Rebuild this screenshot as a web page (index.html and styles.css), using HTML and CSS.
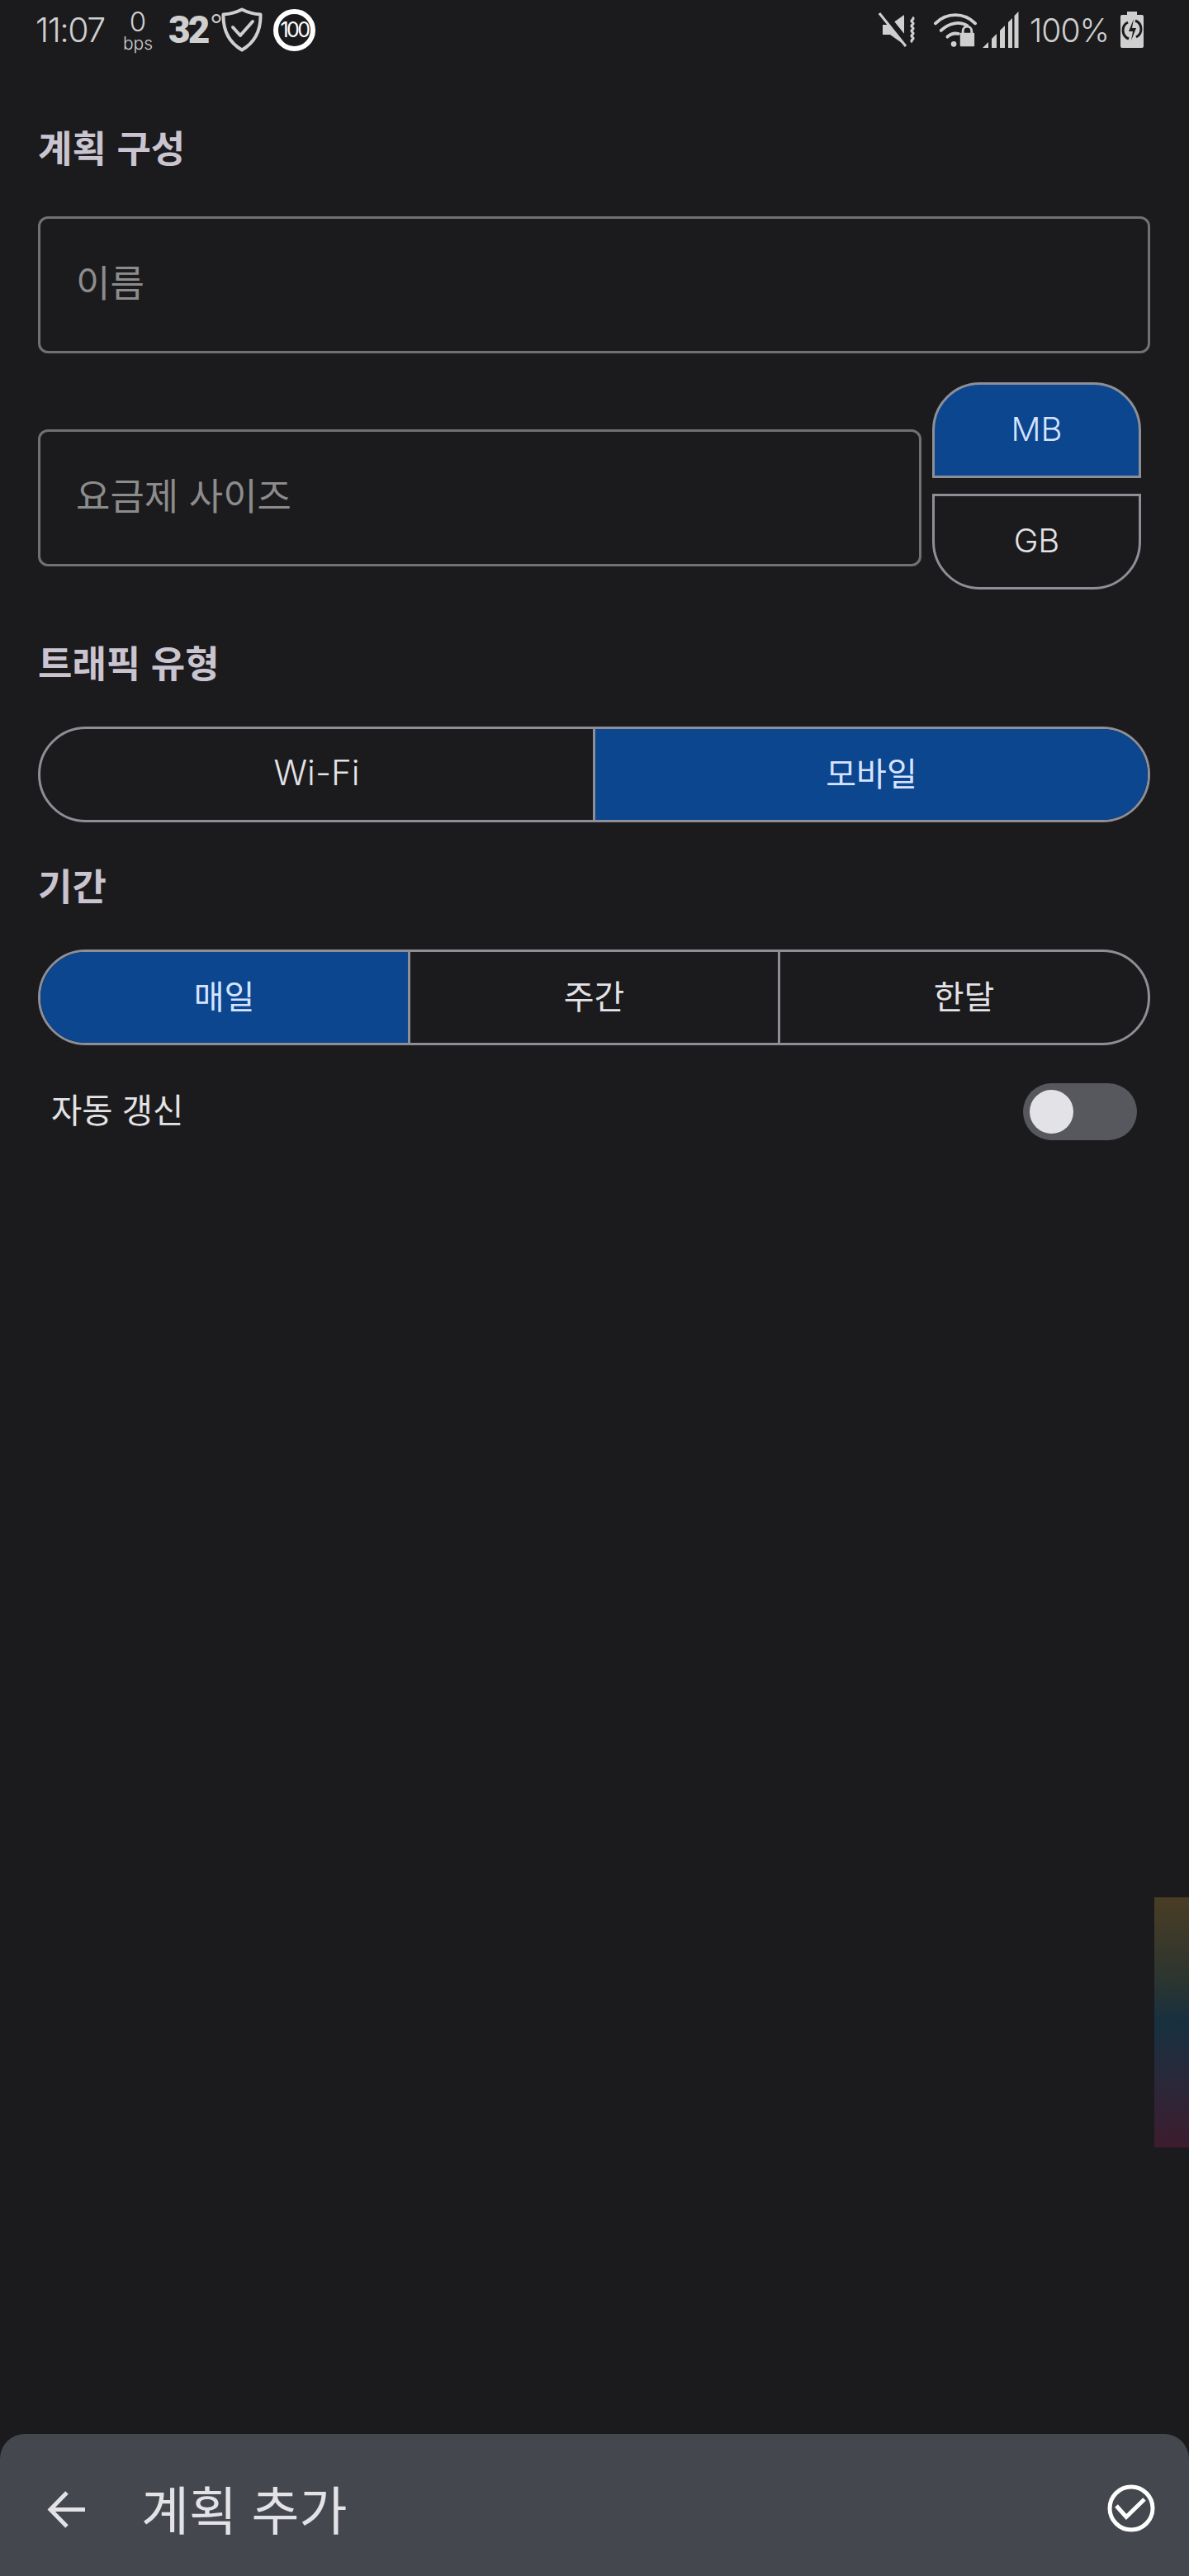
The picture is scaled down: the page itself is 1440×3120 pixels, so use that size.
FILE: index.html
```html
<!DOCTYPE html>
<html lang="ko">
<head>
<meta charset="utf-8">
<title>계획 추가</title>
<link rel="stylesheet" href="styles.css">
</head>
<body>
<div class="page">
  <header class="status">
    <div class="status-left">
      <span class="time">11:07</span>
      <span class="speed"><span class="speed-num">0</span><span class="speed-unit">bps</span></span>
      <span class="temp">32<span class="deg">°</span></span>
      <svg class="ic-shield" viewBox="0 0 50 54" width="50" height="54"><path d="M25 2.5C33 6.5 40 8 47.500 8.500C48 27 41 42 25 51.500C9 42 2 27 2.500 8.500C10 8 17 6.500 25 2.500Z" fill="none" stroke="#cfcfcf" stroke-width="4" stroke-linejoin="round"/><path d="M14 24l9 10 15-17" fill="none" stroke="#cfcfcf" stroke-width="4" stroke-linecap="round" stroke-linejoin="round"/></svg>
      <span class="badge">100</span>
    </div>
    <div class="status-right">
      <svg class="ic-mute" viewBox="0 0 46 42" width="46" height="42"><path d="M5 15h9L31 3v36L14 27H5z" fill="#cfcfcf"/><path d="M5 0l34 42" stroke="#1b1b1d" stroke-width="8"/><path d="M1 1l32 40" stroke="#cfcfcf" stroke-width="3"/><path d="M41 6c4 2.500-4 3.500 0 6s-4 3.500 0 6-4 3.500 0 6-4 3.500 0 6-4 3.500 0 6" fill="none" stroke="#cfcfcf" stroke-width="3"/></svg>
      <svg class="ic-wifi" viewBox="0 0 54 44" width="52" height="44"><g fill="none" stroke="#cfcfcf" stroke-width="4" stroke-linecap="round"><path d="M2 14C16 0 38 0 52 14"/><path d="M9 23C19 13 33 11 42 17"/><path d="M17 31c4-4 9-5 14-4"/></g><circle cx="25" cy="40" r="3.500" fill="#cfcfcf"/><path d="M34 26h16a1 1 0 0 1 1 1v15a1 1 0 0 1-1 1H34a1 1 0 0 1-1-1V27a1 1 0 0 1 1-1z" fill="#cfcfcf"/><path d="M36.500 27v-3.500a5.500 5.500 0 0 1 11 0V27" fill="none" stroke="#cfcfcf" stroke-width="3"/></svg>
      <svg class="ic-signal" viewBox="0 0 44 44" width="44" height="44"><g fill="#cfcfcf"><path d="M0 44l7-7v7z"/><path d="M11 33l6-6v17h-6z"/><path d="M21 23l6-6v27h-6z"/><path d="M31 13l5-5v36h-5z"/><path d="M38.500 5l5-5v44h-5z"/></g></svg>
      <span class="pct">100%</span>
      <svg class="ic-batt" viewBox="0 0 28 44" width="28" height="44"><path d="M8 0h12v4h6a2 2 0 0 1 2 2v36a2 2 0 0 1-2 2H2a2 2 0 0 1-2-2V6a2 2 0 0 1 2-2h6z" fill="#cfcfcf"/><g fill="none" stroke="#1b1b1d" stroke-width="3"><path d="M10 33a11 11 0 0 1-1-20"/><path d="M18 11a11 11 0 0 1 1 20"/></g><path d="M16 9l-6 15h5l-2 11 6-15h-5z" fill="#1b1b1d"/></svg>
    </div>
  </header>

  <main class="form">
    <h2 class="heading heading-plan">계획 구성</h2>
    <div class="field field-name">이름</div>
    <div class="size-row">
      <div class="field field-size">요금제 사이즈</div>
      <div class="units">
        <div class="unit unit-top active">MB</div>
        <div class="unit unit-bottom">GB</div>
      </div>
    </div>
    <h2 class="heading heading-traffic">트래픽 유형</h2>
    <div class="segments">
      <div class="segment segment-latin">Wi-Fi</div>
      <div class="segment active">모바일</div>
    </div>
    <h2 class="heading heading-period">기간</h2>
    <div class="segments">
      <div class="segment active">매일</div>
      <div class="segment">주간</div>
      <div class="segment">한달</div>
    </div>
    <div class="toggle-row">
      <span class="toggle-label">자동 갱신</span>
      <span class="switch"><span class="knob"></span></span>
    </div>
  </main>

  <div class="edge-panel"></div>

  <footer class="bar">
    <svg class="ic-back" viewBox="0 0 48 48" width="48" height="48"><path d="M46 23.500H6M24 3L4 23.500 24 44" fill="none" stroke="#e3e2e6" stroke-width="5"/></svg>
    <span class="bar-title">계획 추가</span>
    <svg class="ic-done" viewBox="0 0 58 58" width="58" height="58"><circle cx="29" cy="29" r="26" fill="none" stroke="#fff" stroke-width="5"/><path d="M11 26l12 13.500L45 18" fill="none" stroke="#fff" stroke-width="5"/></svg>
  </footer>
</div>
</body>
</html>
```

FILE: styles.css
```css
* { box-sizing: border-box; }
html, body { margin: 0; padding: 0; }
body {
  background: #1b1b1d;
  color: #e3e2e6;
  font-family: "Noto Sans CJK KR", "Noto Sans", sans-serif;
}
.page {
  position: relative;
  width: 1440px;
  height: 3120px;
  display: flex;
  flex-direction: column;
  overflow: hidden;
}

/* status bar */
.status {
  height: 72px;
  display: flex;
  justify-content: space-between;
  align-items: center;
  padding: 0 55px 0 43px;
  color: #cfcfcf;
  font-family: Inter, "Noto Sans", sans-serif;
}
.status-left, .status-right { display: flex; align-items: center; }
.time { font-size: 41px; font-weight: 300; letter-spacing: -1.500px; width: 106px; }
.speed {
  width: 56px;
  display: flex;
  flex-direction: column;
  align-items: center;
  margin-left: -10px;
  font-weight: 300;
}
.speed-num { font-size: 33px; line-height: 34px; }
.speed-unit { font-size: 21px; line-height: 20px; }
.temp {
  margin-left: 9px;
  font-family: Roboto, sans-serif;
  font-size: 46px;
  font-weight: 900;
  letter-spacing: -3px;
  width: 64px;
}
.deg { font-weight: 300; position: relative; top: -2px; margin-left: 2px; }
.badge {
  margin-left: 13px;
  width: 51px;
  height: 51px;
  border: 6px solid #fff;
  border-radius: 50%;
  display: flex;
  align-items: center;
  justify-content: center;
  color: #fff;
  font-size: 25px;
  letter-spacing: -2.500px;
  font-weight: 400;
}
.ic-wifi { margin-left: 21px; }
.ic-signal { margin-left: 7px; }
.pct { font-size: 39px; font-weight: 300; letter-spacing: -1px; margin-left: 13px; width: 91px; white-space: nowrap; }
.ic-batt { margin-left: 19px; }

/* form */
.form {
  flex: 1;
  padding: 76px 47px 0 46px;
}
.heading {
  margin: 0;
  height: 60px;
  font-size: 45px;
  line-height: 60px;
  font-weight: 700;
  color: #cac4d0;
}
.field {
  height: 166px;
  border: 3px solid #717171;
  border-radius: 12px;
  display: flex;
  align-items: center;
  padding: 0 0 10px 43px;
  font-size: 45px;
  color: #8c8c8c;
}
.field-name { margin-top: 54px; }
.size-row {
  display: flex;
  align-items: flex-start;
  gap: 13px;
  margin-top: 35px;
  padding-right: 11px;
}
.field-size { flex: 1; margin-top: 57px; }
.units { width: 253px; display: flex; flex-direction: column; gap: 19px; }
.unit {
  height: 116px;
  border: 3px solid #8e8f96;
  display: flex;
  align-items: center;
  justify-content: center;
  padding-bottom: 4px;
  font-family: Inter, "Noto Sans", sans-serif;
  font-size: 40px;
  font-weight: 300;
}
.unit-top { border-radius: 58px 58px 0 0; }
.unit-bottom { border-radius: 0 0 58px 58px; }
.active { background: #0b468f; color: #d6e3ff; }
.heading-traffic { margin-top: 58px; }
.heading-period { margin-top: 46px; }
.segments {
  display: flex;
  height: 116px;
  margin-top: 48px;
  border: 3px solid #8e8f96;
  border-radius: 58px;
  overflow: hidden;
}
.segment {
  flex: 1;
  display: flex;
  align-items: center;
  justify-content: center;
  padding-bottom: 6px;
  font-size: 40px;
  font-weight: 400;
}
.segment-latin { font-family: Inter, "Noto Sans", sans-serif; font-size: 42px; font-weight: 300; }
.segment + .segment { border-left: 3px solid #8e8f96; }
.toggle-row {
  display: flex;
  justify-content: space-between;
  align-items: center;
  height: 69px;
  margin-top: 46px;
  padding: 0 16px;
}
.toggle-label { font-size: 40.500px; color: #e3e2e6; padding-bottom: 8px; }
.switch {
  width: 138px;
  height: 69px;
  border-radius: 35px;
  background: #57585d;
  padding: 8px;
}
.knob { display: block; width: 53px; height: 53px; border-radius: 50%; background: #e3e2e6; }

/* overlay panel at the screen edge */
.edge-panel {
  position: absolute;
  right: 0;
  top: 2298px;
  width: 42px;
  height: 303px;
  background: linear-gradient(180deg, #4a3d24 0%, #2c3530 33%, #17303f 50%, #28293a 72%, #3d1c2e 100%);
}

/* bottom bar */
.bar {
  height: 172px;
  background: #44474e;
  border-radius: 30px 30px 0 0;
  display: flex;
  align-items: center;
  padding: 0 41px 0 57px;
}
.ic-back { margin-top: 12px; }
.ic-done { margin-top: 8px; }
.bar-title {
  flex: 1;
  margin-left: 66px;
  margin-top: 4px;
  font-size: 63px;
  font-weight: 400;
  color: #e3e2e6;
}
```
